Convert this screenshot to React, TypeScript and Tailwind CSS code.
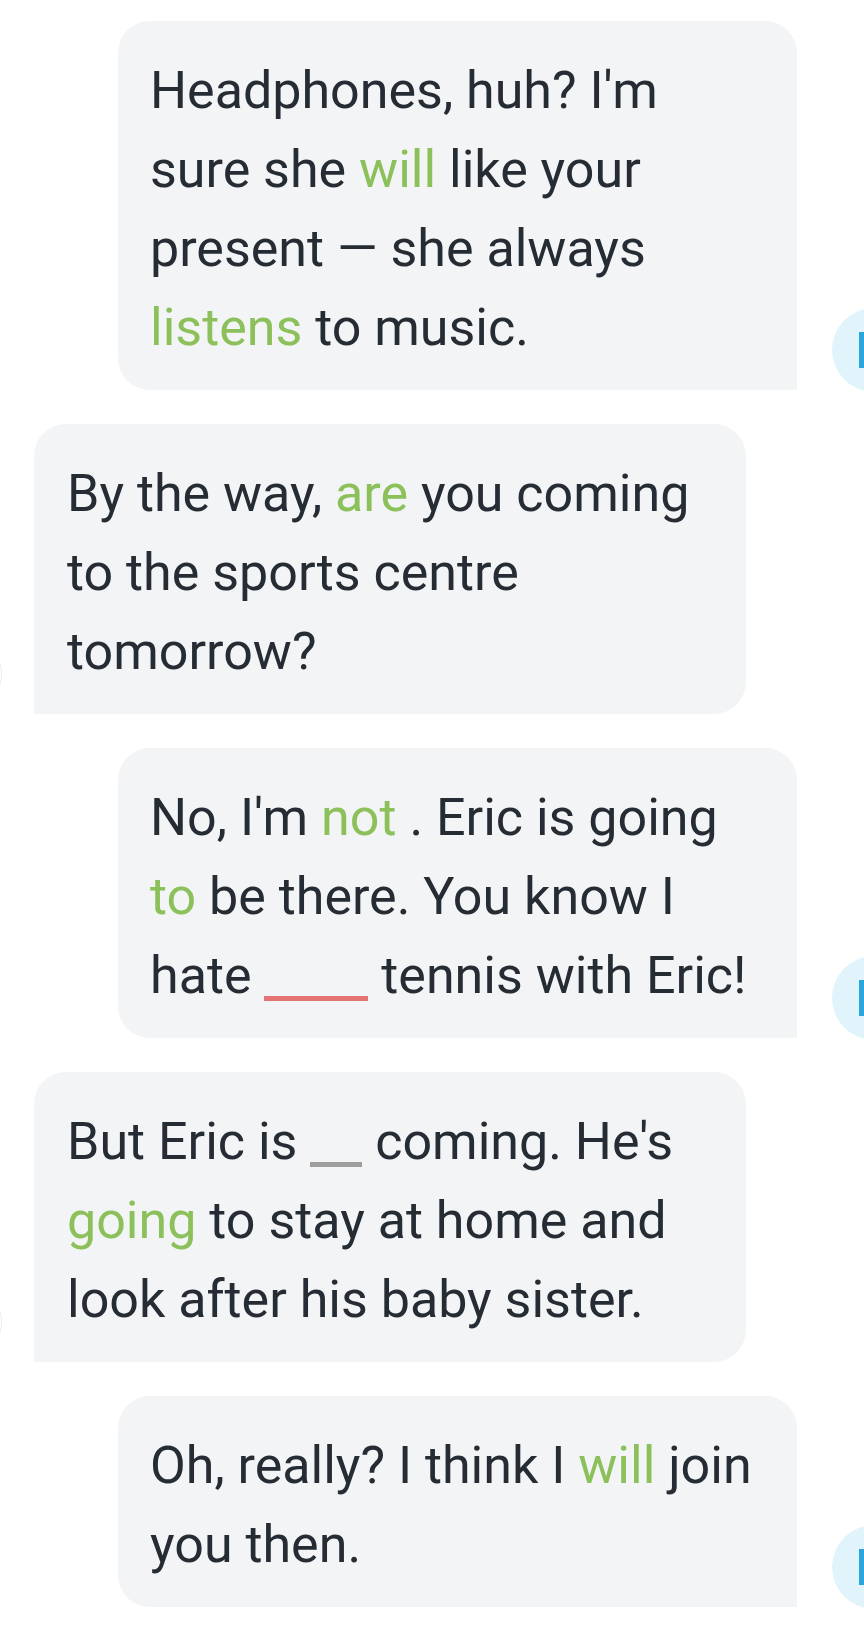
import React from "react";

const G = ({ children }: { children: React.ReactNode }) => (
  <span className="text-[#8cc05a]">{children}</span>
);

const RightAvatar = () => (
  <div className="relative w-[84px] h-[84px] shrink-0 rounded-full bg-[#e1f3fb] overflow-hidden mb-[-2px]">
    <div className="absolute left-[27px] top-[24px] w-[10px] h-[36px] bg-[#2aa6de]" />
  </div>
);

const LeftAvatar = () => (
  <div className="w-[84px] h-[84px] shrink-0 rounded-full bg-white border border-[#ececec] mb-[-2px]" />
);

const RightRow = ({ children }: { children: React.ReactNode }) => (
  <div className="flex items-end justify-end gap-[35px]">
    <div className="w-[679px] rounded-[32px] rounded-br-none bg-[#f3f4f6] pl-[32px] pr-[20px] pt-[30px] pb-[23px]">
      {children}
    </div>
    <RightAvatar />
  </div>
);

const LeftRow = ({ children }: { children: React.ReactNode }) => (
  <div className="flex items-end justify-start gap-[32px]">
    <LeftAvatar />
    <div className="w-[712px] rounded-[32px] rounded-bl-none bg-[#f3f4f6] pl-[33px] pr-[20px] pt-[30px] pb-[23px]">
      {children}
    </div>
  </div>
);

export default function App() {
  return (
    <div className="w-[864px] h-[1640px] overflow-hidden bg-white">
      <div
        className="ml-[-82px] w-[998px] pt-[21px] flex flex-col gap-[34px] text-[52px] leading-[79px] text-[#252c33]"
        style={{ fontFamily: "Roboto, 'Noto Sans', sans-serif" }}
      >
        <RightRow>
          <div className="w-[611px]">
            Headphones, huh? I'm sure she <G>will</G> like your present — she always{" "}
            <G>listens</G> to music.
          </div>
        </RightRow>
        <LeftRow>
          <div className="w-[644px]">
            By the way, <G>are</G> you coming to the sports centre tomorrow?
          </div>
        </LeftRow>
        <RightRow>
          <div className="w-[611px]">
            No, I'm <G>not</G> . Eric is going <G>to</G> be there. You know I hate{" "}
            <span className="inline-block w-[104px] h-[5px] bg-[#e57373] align-[-8px]" /> tennis
            with Eric!
          </div>
        </RightRow>
        <LeftRow>
          <div className="w-[644px]">
            But Eric is{" "}
            <span className="inline-block w-[52px] h-[5px] bg-[#9e9e9e] align-[-8px]" /> coming.
            He's <G>going</G> to stay at home and look after his baby sister.
          </div>
        </LeftRow>
        <RightRow>
          <div className="w-[611px]">
            Oh, really? I think I <G>will</G> join you then.
          </div>
        </RightRow>
      </div>
    </div>
  );
}
